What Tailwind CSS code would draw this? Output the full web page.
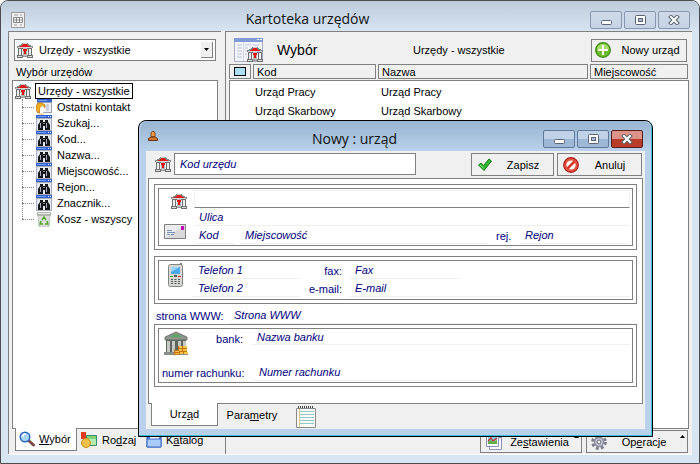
<!DOCTYPE html>
<html lang="pl">

<head>
    <meta charset="UTF-8">
    <meta name="viewport" content="width=device-width, initial-scale=1.0">
    <title>Kartoteka urzędów</title>
    <script src="https://cdn.jsdelivr.net/npm/@tailwindcss/browser@4"></script>
</head>

<body class="relative h-screen overflow-hidden bg-white font-['Liberation_Sans',Arial,sans-serif] text-[11px] leading-4 text-black">

    <!-- Ikony -->
    <svg class="hidden" xmlns="http://www.w3.org/2000/svg">
        <symbol id="urzad" viewBox="0 0 16 16">
            <path d="M0 6V4h2V3h2V2h1V1h6v1h1v1h2v1h2v2z" fill="#858585"/>
            <path d="M1 5h14v1H1z" fill="#d8d8d8"/>
            <path d="M3 4h2V3h1V2h4v1h1v1h2v1H3z" fill="#e01818"/>
            <path d="M6 1h4v1H6z" fill="#c9c9c9"/>
            <path d="M1 6h14v8H1z" fill="#6f6f6f"/>
            <path d="M2 7h2v6H2zM5 7h1v6H5zM10 7h1v6h-1zM12 7h2v6h-2z" fill="#efefef"/>
            <path d="M6 6h4v8H6z" fill="#b9b9b9"/>
            <path d="M6 7h4v2H9v3H7V9H6z" fill="#e01010"/>
            <path d="M0 13h6v3H0zM10 13h6v3h-6z" fill="#6f6f6f"/>
            <path d="M1 14h4v1H1zM11 14h4v1h-4z" fill="#dedede"/>
            <path d="M6 14h4v1H6z" fill="#999"/>
        </symbol>
        <symbol id="lornetka" viewBox="0 0 16 16">
            <path d="M0 0h16v16H0z" fill="#a9afbb"/>
            <path d="M0 0h16v3H0z" fill="#2f62cf"/>
            <path d="M1 1h9v1H1z" fill="#6c9af0"/>
            <path d="M12 1h1v1h-1zM14 1h1v1h-1z" fill="#fff"/>
            <path d="M1 4h14v11H1z" fill="#e4e7ee"/>
            <path d="M4 5h3v2h2V5h3v2l2 3v5H9v-4H7v4H2v-5l2-3z" fill="#15171c"/>
            <path d="M4 8h1v5H4zM10 8h1v5h-1z" fill="#a9b0bb"/>
            <path d="M7 8h2v1H7z" fill="#777"/>
        </symbol>
        <symbol id="kontakt" viewBox="0 0 16 16">
            <path d="M1 0h15v14H1z" fill="#9aa0ac"/>
            <path d="M1 0h15v3H1z" fill="#2f62cf"/>
            <path d="M2 1h9v1H2z" fill="#6c9af0"/>
            <path d="M2 4h13v9H2z" fill="#eef0f5"/>
            <path d="M10 5h3v7h-3z" fill="#ccd0da"/>
            <path d="M0 7l2-3h4l3 2v3L6 7 4 9v4l-2 1-2-3z" fill="#f0ab24" stroke="#b46b10" stroke-width=".6"/>
            <path d="M4 9l2-2 2 1 1 3-2 3H4z" fill="#fff"/>
            <path d="M2 14h6v2H2z" fill="#f6d9b0"/>
        </symbol>
        <symbol id="kosz" viewBox="0 0 16 16">
            <path d="M2 4h12l-1 12H3z" fill="#dcded9" stroke="#a9aca6" stroke-width=".6"/>
            <path d="M1 1h14v4H1z" fill="#b3b6ae"/>
            <path d="M2 2h12v1H2z" fill="#e8eae5"/>
            <path d="M6 9l2-3 2 3M11 10l1 3H9M7 13H4l1-3" fill="none" stroke="#4da822" stroke-width="1.4"/>
        </symbol>
        <symbol id="bank" viewBox="0 0 24 24">
            <path d="M1 6l11-5 11 5v3H1z" fill="#8c948c" stroke="#666" stroke-width=".8"/>
            <path d="M6 6l6-3 6 3z" fill="#58a85b"/>
            <path d="M2 9h20v12H2z" fill="#5f645f"/>
            <path d="M3 10h3v11H3zM8 10h3v11H8zM14 10h3v11h-3zM19 10h3v11h-3z" fill="#c4c9c4"/>
            <path d="M0 21h24v3H0z" fill="#888e88"/>
            <path d="M14 15h9v8h-9zM10 19h5v5h-5z" fill="#c86f0c"/>
            <path d="M15 15h3v2h-3zM19 15h4v2h-4zM15 18h3v2h-3zM19 18h4v2h-4zM11 20h4v1h-4zM16 21h3v2h-3zM20 21h4v2h-4zM11 22h4v1h-4z" fill="#ffc648"/>
        </symbol>
        <symbol id="minimalizuj" viewBox="0 0 12 10">
            <rect x="1.5" y="5.5" width="10" height="4" rx="1" fill="#fff" stroke="#5b6372"/>
        </symbol>
        <symbol id="maksymalizuj" viewBox="0 0 12 10">
            <rect x="1.5" y=".5" width="10" height="9" rx="1" fill="#fff" stroke="#5b6372"/>
            <rect x="4.5" y="3.5" width="4" height="3" fill="#a9bdd6" stroke="#5b6372"/>
        </symbol>
        <symbol id="zamknij" viewBox="0 0 12 10">
            <path d="M3 2l6 6M9 2L3 8" stroke="#5b6372" stroke-width="4" stroke-linecap="square"/>
            <path d="M3 2l6 6M9 2L3 8" stroke="#fff" stroke-width="2" stroke-linecap="square"/>
        </symbol>
    </svg>

    <!-- Okno główne -->
    <main class="flex h-full flex-col rounded-t-lg border border-[#4b4b50] bg-[#d7e4f2] px-[7px] pb-2">
        <header class="-mx-[7px] flex h-[30px] shrink-0 items-center rounded-t-lg bg-linear-to-b from-[#bdccdb] to-[#d7e4f2] px-[9px]">
            <svg class="ml-px mt-2 h-4 w-[14px]" viewBox="0 0 14 16">
                <path d="M.5.5h13v15H.5z" fill="#f0f0f0" stroke="#9a9a9a"/>
                <path d="M3 3h4M9 3h2M3 13h3M9 13h2" stroke="#999"/>
                <path d="M2.5 5.5h9v5h-9zM2.5 8h9M5.5 5.5v5M8.5 5.5v5" fill="#fff" stroke="#888"/>
            </svg>
            <h1 class="mt-1.5 flex-1 text-center font-['Open_Sans',sans-serif] text-sm leading-4 text-[#111]">Kartoteka urzędów</h1>
            <div class="mt-2 flex justify-end gap-0.5">
                <button type="button" aria-label="Minimalizuj" class="flex h-[18px] w-8 items-center justify-center rounded-xs border border-[#8797ae] bg-linear-to-b from-[#cfdae8] to-[#c4d3e4]"><svg class="h-[10px] w-3"><use href="#minimalizuj"/></svg></button>
                <button type="button" aria-label="Maksymalizuj" class="flex h-[18px] w-8 items-center justify-center rounded-xs border border-[#8797ae] bg-linear-to-b from-[#cfdae8] to-[#c4d3e4]"><svg class="h-[10px] w-3"><use href="#maksymalizuj"/></svg></button>
                <button type="button" aria-label="Zamknij" class="flex h-[18px] w-8 items-center justify-center rounded-xs border border-[#8797ae] bg-linear-to-b from-[#cfdae8] to-[#c4d3e4]"><svg class="h-[10px] w-3"><use href="#zamknij"/></svg></button>
            </div>
        </header>

        <div class="flex min-h-0 flex-1 gap-1 border-b border-white bg-[#f0f0f0]">
            <!-- Lewy panel -->
            <aside class="flex w-[213px] shrink-0 flex-col border-l border-t border-[#808080] pl-[3px] pr-[3px] pt-[7px]">
                <div class="relative mx-0.5 flex h-[22px] shrink-0 items-center border border-[#808080] bg-white pl-0.5">
                    <svg class="mr-1.5 h-4 w-4 shrink-0"><use href="#urzad"/></svg>
                    <select aria-label="Rodzaj urzędów" class="h-full min-w-0 flex-1 appearance-none bg-white outline-none">
                        <option>Urzędy - wszystkie</option>
                    </select>
                    <span class="pointer-events-none absolute right-0.5 top-0.5 flex h-4 w-3 items-center justify-center border-b border-r border-[#808080] bg-[#f0f0f0]">
                        <svg class="h-[3px] w-[5px]" viewBox="0 0 5 3"><path d="M0 0h5L2.5 3z"/></svg>
                    </span>
                </div>
                <h2 class="ml-1 mt-[3px] h-4 shrink-0">Wybór urzędów</h2>
                <div class="min-h-0 flex-1 border border-b-0 border-[#808080] bg-white pl-0.5 pt-0.5">
                    <div class="flex h-4 items-center">
                        <svg class="h-4 w-4"><use href="#urzad"/></svg>
                        <button type="button" class="ml-1 h-4 border border-black px-0.5 leading-[14px]">Urzędy - wszystkie</button>
                    </div>
                    <ul class="relative ml-[7px] before:absolute before:bottom-2 before:left-0 before:top-0 before:border-l before:border-dotted before:border-[#808080]">
                        <li class="flex h-4 items-center"><span class="mr-0.5 w-3 border-t border-dotted border-[#808080]"></span><svg class="mr-[5px] h-4 w-4"><use href="#kontakt"/></svg><button type="button">Ostatni kontakt</button></li>
                        <li class="flex h-4 items-center"><span class="mr-0.5 w-3 border-t border-dotted border-[#808080]"></span><svg class="mr-[5px] h-4 w-4"><use href="#lornetka"/></svg><button type="button">Szukaj...</button></li>
                        <li class="flex h-4 items-center"><span class="mr-0.5 w-3 border-t border-dotted border-[#808080]"></span><svg class="mr-[5px] h-4 w-4"><use href="#lornetka"/></svg><button type="button">Kod...</button></li>
                        <li class="flex h-4 items-center"><span class="mr-0.5 w-3 border-t border-dotted border-[#808080]"></span><svg class="mr-[5px] h-4 w-4"><use href="#lornetka"/></svg><button type="button">Nazwa...</button></li>
                        <li class="flex h-4 items-center"><span class="mr-0.5 w-3 border-t border-dotted border-[#808080]"></span><svg class="mr-[5px] h-4 w-4"><use href="#lornetka"/></svg><button type="button">Miejscowość...</button></li>
                        <li class="flex h-4 items-center"><span class="mr-0.5 w-3 border-t border-dotted border-[#808080]"></span><svg class="mr-[5px] h-4 w-4"><use href="#lornetka"/></svg><button type="button">Rejon...</button></li>
                        <li class="flex h-4 items-center"><span class="mr-0.5 w-3 border-t border-dotted border-[#808080]"></span><svg class="mr-[5px] h-4 w-4"><use href="#lornetka"/></svg><button type="button">Znacznik...</button></li>
                        <li class="flex h-4 items-center"><span class="mr-0.5 w-3 border-t border-dotted border-[#808080]"></span><svg class="mr-[5px] h-4 w-4"><use href="#kosz"/></svg><button type="button">Kosz - wszyscy</button></li>
                    </ul>
                </div>
                <!-- Zakładki lewego panelu -->
                <nav class="flex h-[26px] shrink-0 items-start">
                    <span class="h-px w-[3px] bg-[#808080]"></span>
                    <button type="button" class="flex h-[23px] w-[62px] items-center gap-1 border border-t-0 border-[#808080] bg-white pl-[3px]">
                        <svg class="h-4 w-4" viewBox="0 0 16 16">
                            <path d="M9 9l5.5 5" stroke="#7d4a45" stroke-width="3" stroke-linecap="round"/>
                            <circle cx="6" cy="6" r="4.8" fill="#a8d5fb" stroke="#2767c0" stroke-width="1.4"/>
                            <path d="M3.5 6a3 3 0 013-3" fill="none" stroke="#fff" stroke-width="1.5"/>
                        </svg>
                        <span><u>W</u>ybór</span>
                    </button>
                    <span class="flex flex-1 border-t border-[#808080]">
                        <button type="button" class="flex h-[22px] w-[65px] items-center gap-[5px] pl-1">
                            <svg class="h-4 w-4" viewBox="0 0 16 16">
                                <path d="M5.5 3.5h10v10h-10z" fill="#7fd077" stroke="#3a8f6a"/>
                                <path d="M7 7h8v6H7z" fill="#b6ecb0"/>
                                <path d="M0 0h5v7H0z" fill="#e23b1c"/>
                                <circle cx="5" cy="11" r="4.5" fill="#f1c04a" stroke="#cf8f1e"/>
                            </svg>
                            <span>Ro<u>d</u>zaj</span>
                        </button>
                        <button type="button" class="flex h-[22px] items-center gap-1 pl-1">
                            <svg class="h-4 w-4" viewBox="0 0 16 16">
                                <path d="M1 2h5l1 2h8v11H1z" fill="#4c7ee0" stroke="#2c57b8"/>
                                <path d="M4 3h9v4H4z" fill="#fff"/>
                                <path d="M1 7h14v8H1z" fill="#a9cbf7" stroke="#3b69c9"/>
                            </svg>
                            <span>K<u>a</u>talog</span>
                        </button>
                    </span>
                </nav>
            </aside>

            <!-- Prawy panel -->
            <section class="flex min-w-0 flex-1 flex-col border-l border-t border-[#808080] pl-[3px] pr-[3px]">
                <div class="flex h-8 shrink-0 items-center pl-[5px] pr-0.5">
                    <svg class="mt-1 h-6 w-[30px]" viewBox="0 0 30 24">
                        <path d="M.5.5h28v23H.5z" fill="#f2f4fa" stroke="#a5aec5"/>
                        <path d="M0 0h29v4H0z" fill="#7f9ad6"/>
                        <path d="M23 1h2v1h-2zM26 1h2v1h-2z" fill="#fff"/>
                        <path d="M3 7h5M3 10h5M3 13h5M3 16h5M3 19h5M11 7h6M11 10h3M11 13h2M11 16h2M19 7h6" stroke="#bcc5dc"/>
                        <path d="M9.5 4v19" stroke="#d4d9e8"/>
                        <use href="#urzad" x="13" y="8" width="16" height="16"/>
                    </svg>
                    <h2 class="ml-[13px] mt-1 w-[136px] text-sm leading-4">Wybór</h2>
                    <p class="mt-1 flex-1">Urzędy - wszystkie</p>
                    <button type="button" class="mt-1 flex h-[23px] w-24 items-center border border-[#808080] pl-[3px]">
                        <svg class="h-4 w-4" viewBox="0 0 16 16">
                            <circle cx="8" cy="8" r="7.3" fill="#6fbd2c" stroke="#3f8a16" stroke-width="1.3"/>
                            <path d="M2 7a6 5 0 0112 0z" fill="#a5dd6c"/>
                            <path d="M8 3v10M3 8h10" stroke="#fff" stroke-width="2"/>
                        </svg>
                        <span class="flex-1 pl-1 text-center">Nowy urząd</span>
                    </button>
                </div>
                <table class="min-h-0 w-full flex-1 table-fixed border-separate border-spacing-0 text-left">
                    <thead>
                        <tr class="h-4">
                            <th class="w-6 p-0 pb-px pr-0.5 font-normal"><span class="flex h-[15px] items-center justify-center border border-[#808080]"><input type="checkbox" aria-label="Zaznacz wszystkie" class="h-[9px] w-3 appearance-none border border-black bg-[#a8dff5]"></span></th>
                            <th class="w-[125px] p-0 pb-px pr-0.5 font-normal"><span class="block h-[15px] border border-[#808080] pl-[3px] leading-[14px]">Kod</span></th>
                            <th class="p-0 pb-px pr-0.5 font-normal"><span class="block h-[15px] border border-[#808080] pl-[3px] leading-[14px]">Nazwa</span></th>
                            <th class="w-[99px] p-0 pb-px pr-px font-normal"><span class="block h-[15px] border border-[#808080] pl-[3px] leading-[14px]">Miejscowość</span></th>
                        </tr>
                    </thead>
                    <tbody class="bg-white">
                        <tr class="h-[21px]">
                            <td class="border-l border-t border-[#808080] p-0"></td>
                            <td class="border-t border-[#808080] p-0 pl-0.5 pt-0.5">Urząd Pracy</td>
                            <td class="border-t border-[#808080] p-0 pl-[3px] pt-0.5">Urząd Pracy</td>
                            <td class="border-r border-t border-[#808080] p-0"></td>
                        </tr>
                        <tr class="h-[19px]">
                            <td class="border-l border-[#808080] p-0"></td>
                            <td class="p-0 pl-0.5">Urząd Skarbowy</td>
                            <td class="p-0 pl-[3px]">Urząd Skarbowy</td>
                            <td class="border-r border-[#808080] p-0"></td>
                        </tr>
                        <tr>
                            <td colspan="4" class="border border-t-0 border-[#808080] p-0"></td>
                        </tr>
                    </tbody>
                </table>
                <footer class="mt-px flex h-6 shrink-0 justify-end gap-1 pr-px">
                    <button type="button" class="relative flex h-[23px] w-[102px] items-center border border-[#808080] pl-[5px]">
                        <svg class="h-4 w-4" viewBox="0 0 16 16">
                            <path d="M3.5 3.5h12v12h-12z" fill="#fff" stroke="#8a8fc0"/>
                            <path d="M.5.5h12v12H.5z" fill="#fff" stroke="#8a8fc0"/>
                            <path d="M2 3h9v7H2z" fill="#8fd0e8"/>
                            <path d="M2 8l3-2 2 2 4-2v4H2z" fill="#5fae4a"/>
                            <path d="M2 7l3-3 2 3 4-3" fill="none" stroke="#c22" stroke-width="1.2"/>
                        </svg>
                        <span class="flex-1 pr-1 text-center">Ze<u>s</u>tawienia</span>
                        <svg class="absolute right-0.5 top-1 h-[3px] w-[5px]" viewBox="0 0 5 3"><path d="M0 3h5L2.5 0z"/></svg>
                    </button>
                    <button type="button" class="relative flex h-[23px] w-[102px] items-center border border-[#808080] pl-1">
                        <svg class="h-4 w-4" viewBox="0 0 16 16">
                            <circle cx="8" cy="8" r="6.3" fill="none" stroke="#777b8a" stroke-width="3" stroke-dasharray="2.8 2.15"/>
                            <circle cx="8" cy="8" r="4.5" fill="#c9cbd8" stroke="#8b8f9e" stroke-width="1.5"/>
                            <circle cx="8" cy="8" r="2" fill="#f0f0f0" stroke="#666a78"/>
                        </svg>
                        <span class="flex-1 pr-1.5 text-center">Op<u>e</u>racje</span>
                        <svg class="absolute right-0.5 top-1 h-[3px] w-[5px]" viewBox="0 0 5 3"><path d="M0 3h5L2.5 0z"/></svg>
                    </button>
                </footer>
            </section>
        </div>
    </main>

    <!-- Okno dialogowe: nowy urząd -->
    <div role="dialog" aria-labelledby="tytul-okna" class="absolute bottom-[27px] left-[138px] right-[47px] top-[120px] flex flex-col rounded-t-lg border border-black bg-[#b9d1ea] px-[7px] pb-[7px] shadow-[inset_-1px_-1px_0_#3cc0e0]">
        <header class="-mx-[6px] flex h-[30px] shrink-0 items-center rounded-t-lg bg-linear-to-b from-[#98b4d2] to-[#b9d1ea] px-2">
            <svg class="h-[10px] w-[10px]" viewBox="0 0 10 10">
                <path d="M.5 9.5v-2L3 6h4l2.5 1.5v2z" fill="#d9752a" stroke="#6b3410"/>
                <path d="M3 2l1-1.5h2L7 2v3.5H3z" fill="#f09a4c" stroke="#6b3410" stroke-width=".8"/>
            </svg>
            <h2 id="tytul-okna" class="mt-1.5 flex-1 pl-2 text-center font-['Open_Sans',sans-serif] text-sm leading-4 text-[#111]">Nowy : urząd</h2>
            <div class="mt-1.5 flex justify-end gap-0.5">
                <button type="button" aria-label="Minimalizuj" class="flex h-[18px] w-8 items-center justify-center rounded-xs border border-[#60789a] bg-linear-to-b from-[#bfd2e8] from-50% to-[#9db8d6] to-50%"><svg class="h-[10px] w-3"><use href="#minimalizuj"/></svg></button>
                <button type="button" aria-label="Maksymalizuj" class="flex h-[18px] w-8 items-center justify-center rounded-xs border border-[#60789a] bg-linear-to-b from-[#bfd2e8] from-50% to-[#9db8d6] to-50%"><svg class="h-[10px] w-3"><use href="#maksymalizuj"/></svg></button>
                <button type="button" aria-label="Zamknij" class="flex h-[18px] w-8 items-center justify-center rounded-xs border border-[#5a1d1d] bg-linear-to-b from-[#dd9387] from-50% to-[#b83c28] to-50%"><svg class="h-[10px] w-3"><use href="#zamknij"/></svg></button>
            </div>
        </header>

        <form class="flex min-h-0 flex-1 flex-col bg-[#f0f0f0] px-0.5 text-[#000080]">
            <div class="flex h-[27px] shrink-0 items-start pl-[7px] pr-px pt-0.5">
                <svg class="mr-[3px] mt-[3px] h-4 w-4"><use href="#urzad"/></svg>
                <input type="text" aria-label="Kod urzędu" placeholder="Kod urzędu" class="h-[22px] w-[242px] border border-[#808080] bg-white px-[5px] italic outline-none placeholder:text-[#000080]">
                <button type="submit" class="ml-auto flex h-[23px] w-[83px] items-center border border-[#808080] pl-[5px] text-black">
                    <svg class="h-4 w-4" viewBox="0 0 16 16">
                        <path d="M1.5 8L4 6l2.500 2.500L12 2l2.500 2L7 13.500z" fill="#2fb52f" stroke="#147a14" stroke-linejoin="round"/>
                        <path d="M3 8l3.500 3" stroke="#8be58b"/>
                    </svg>
                    <span class="flex-1 text-center">Zapisz</span>
                </button>
                <button type="button" class="ml-[3px] flex h-[23px] w-[85px] items-center border border-[#808080] pl-[5px] text-black">
                    <svg class="h-4 w-4" viewBox="0 0 16 16">
                        <circle cx="8" cy="8" r="7.3" fill="#e5503f" stroke="#a82018" stroke-width="1.2"/>
                        <circle cx="8" cy="8" r="4.6" fill="#fff"/>
                        <path d="M4.500 11.500l7-7" stroke="#d8382a" stroke-width="2.500"/>
                    </svg>
                    <span class="flex-1 text-center">Anuluj</span>
                </button>
            </div>

            <div class="min-h-0 flex-1 border border-b-0 border-[#808080] bg-white p-[5px]">
                <!-- Adres -->
                <fieldset class="border border-[#808080] p-[3px]">
                    <div class="grid h-[58px] grid-cols-[32px_1fr] gap-x-[3px] border border-[#808080] pr-0.5">
                        <div class="flex flex-col items-end pt-1">
                            <svg class="mr-1 h-4 w-4"><use href="#urzad"/></svg>
                            <svg class="mr-[5px] mt-[15px] h-[15px] w-[22px]" viewBox="0 0 22 15">
                                <path d="M.5.5h21v14H.5z" fill="#d9d9dc" stroke="#808080"/>
                                <path d="M1 14L21 1H1z" fill="#ececee"/>
                                <path d="M3 6.5h5M3 8.5h8M3 10.5h3M7 10.5h3" stroke="#7a90bd"/>
                                <path d="M17 2h3v4h-3z" fill="#c200b8"/>
                            </svg>
                        </div>
                        <div class="pt-px">
                            <input type="text" aria-label="Nazwa urzędu" class="block h-[18px] w-full border border-[#f0f0f0] border-b-[#808080] px-1 outline-none">
                            <input type="text" aria-label="Ulica" placeholder="Ulica" class="block h-[18px] w-full border-b border-[#f0f0f0] px-[5px] italic outline-none placeholder:text-[#000080]">
                            <div class="flex h-[18px]">
                                <input type="text" aria-label="Kod pocztowy" placeholder="Kod" class="mr-[5px] h-full w-[41px] border-b border-[#f0f0f0] px-[5px] italic outline-none placeholder:text-[#000080]">
                                <input type="text" aria-label="Miejscowość" placeholder="Miejscowość" class="h-full min-w-0 flex-1 border-b border-[#f0f0f0] px-[5px] italic outline-none placeholder:text-[#000080]">
                                <label for="rejon" class="w-8 pl-2 pt-0.5">rej.</label>
                                <input id="rejon" type="text" placeholder="Rejon" class="h-full w-[110px] border-b border-[#f0f0f0] px-[5px] italic outline-none placeholder:text-[#000080]">
                            </div>
                        </div>
                    </div>
                </fieldset>

                <!-- Telefony -->
                <fieldset class="mt-1.5 border border-[#808080] p-[3px]">
                    <div class="flex h-10 border border-[#808080] pr-0.5">
                        <svg class="ml-[9px] mt-0.5 mr-[9px] h-6 w-[15px] shrink-0" viewBox="0 0 15 24">
                            <path d="M12 0h2v5h-2z" fill="#777"/>
                            <rect x=".5" y="1.5" width="14" height="22" rx="2" fill="#d5d8d5" stroke="#808580"/>
                            <path d="M3 4h9v7H3z" fill="#4aa8ee"/>
                            <path d="M3 4h9L3 9z" fill="#9ad4fb"/>
                            <path d="M2 13h3v1H2z" fill="#2ca02c"/>
                            <path d="M10 13h3v1h-3z" fill="#d22"/>
                            <path d="M6 12h3v2H6zM3 16h2v1H3zM6.5 16h2v1h-2zM10 16h2v1h-2zM3 18h2v1H3zM6.5 18h2v1h-2zM10 18h2v1h-2zM3 20h2v1H3zM6.5 20h2v1h-2zM10 20h2v1h-2z" fill="#555"/>
                        </svg>
                        <div class="flex min-w-0 flex-1 flex-col">
                            <div class="flex h-[18px]">
                                <input type="text" aria-label="Telefon 1" placeholder="Telefon 1" class="h-full w-[108px] border-b border-[#f0f0f0] px-[6px] italic outline-none placeholder:text-[#000080]">
                                <label for="fax" class="w-[50px] pr-2 pt-0.5 text-right">fax:</label>
                                <input id="fax" type="text" placeholder="Fax" class="h-full w-[110px] border-b border-[#f0f0f0] px-[5px] italic outline-none placeholder:text-[#000080]">
                            </div>
                            <div class="flex h-[18px]">
                                <input type="text" aria-label="Telefon 2" placeholder="Telefon 2" class="h-full w-[108px] border-b border-[#f0f0f0] px-[6px] italic outline-none placeholder:text-[#000080]">
                                <label for="email" class="w-[50px] pr-2 pt-0.5 text-right">e-mail:</label>
                                <input id="email" type="email" placeholder="E-mail" class="h-full min-w-0 flex-1 border-b border-[#f0f0f0] px-[5px] italic outline-none placeholder:text-[#000080]">
                            </div>
                        </div>
                    </div>
                </fieldset>

                <div class="flex h-5 items-end pl-0.5 pr-1.5">
                    <label for="www" class="w-[73px] whitespace-nowrap">strona WWW:</label>
                    <input id="www" type="url" placeholder="Strona WWW" class="h-[18px] min-w-0 flex-1 border-b border-[#f0f0f0] px-[5px] italic outline-none placeholder:text-[#000080]">
                </div>

                <!-- Bank -->
                <fieldset class="border border-[#808080] p-[3px]">
                    <div class="flex h-[55px] flex-col border border-[#808080] pr-0.5">
                        <div class="flex items-start">
                            <svg class="ml-[5px] mt-0.5 h-6 w-6 shrink-0"><use href="#bank"/></svg>
                            <label for="bank-nazwa" class="w-16 pr-[9px] pt-0.5 text-right">bank:</label>
                            <input id="bank-nazwa" type="text" placeholder="Nazwa banku" class="h-4 min-w-0 flex-1 border-b border-[#f0f0f0] px-[5px] italic outline-none placeholder:text-[#000080]">
                        </div>
                        <div class="mt-auto flex pb-px">
                            <label for="rachunek" class="w-[95px] whitespace-nowrap pl-[3px] pt-0.5">numer rachunku:</label>
                            <input id="rachunek" type="text" placeholder="Numer rachunku" class="h-[18px] min-w-0 flex-1 border-b border-[#f0f0f0] px-[5px] italic outline-none placeholder:text-[#000080]">
                        </div>
                    </div>
                </fieldset>
            </div>

            <!-- Zakładki okna -->
            <nav class="flex h-[26px] shrink-0 text-black">
                <span class="h-px w-[3px] bg-[#808080]"></span>
                <button type="button" class="h-[23px] w-[67px] border border-t-0 border-[#808080] bg-white">Urz<u>ą</u>d</button>
                <span class="flex flex-1 items-start border-t border-[#808080]">
                    <button type="button" class="h-[22px] w-[68px]">Para<u>m</u>etry</button>
                    <button type="button" aria-label="Notatki" class="ml-[10px] mt-0.5">
                        <svg class="h-[22px] w-5" viewBox="0 0 20 22">
                            <path d="M.5 2.5h19v19H.5z" fill="#fafaf6" stroke="#8a8a8a"/>
                            <path d="M2 1h16" stroke="#444" stroke-width="2" stroke-dasharray="1 1"/>
                            <path d="M3 5.5h15M3 8.5h15M3 11.5h15M3 14.5h15M3 17.5h15" stroke="#8fc9cc"/>
                            <path d="M3.5 3v18" stroke="#d8c68c"/>
                        </svg>
                    </button>
                </span>
            </nav>
        </form>
    </div>
</body>

</html>
